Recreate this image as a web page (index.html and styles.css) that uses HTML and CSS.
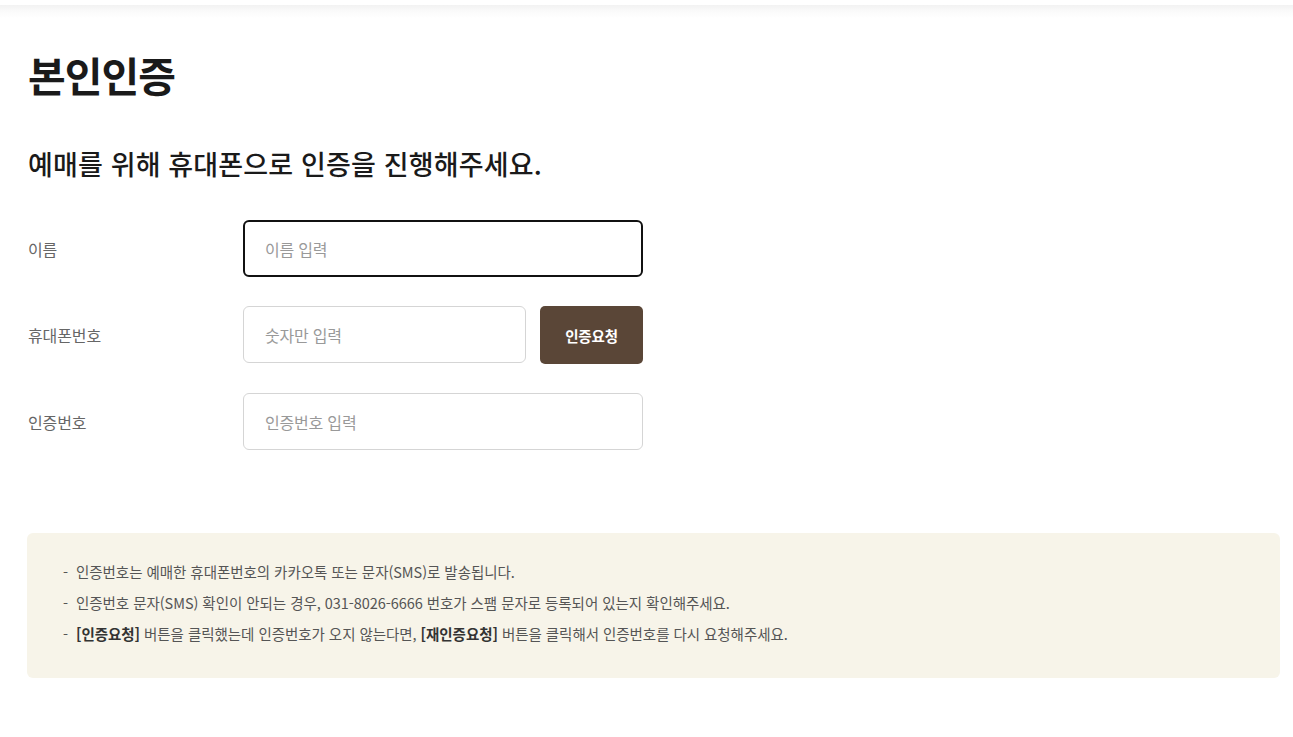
FILE: index.html
```html
<!DOCTYPE html>
<html lang="ko">
<head>
<meta charset="utf-8">
<title>본인인증</title>
<link rel="stylesheet" href="styles.css">
</head>
<body>
<div class="top-shade"></div>
<main class="page">
  <h1 class="title">본인인증</h1>
  <h2 class="subtitle">예매를 위해 휴대폰으로 인증을 진행해주세요.</h2>
  <form class="form">
    <div class="row">
      <label class="label" for="name">이름</label>
      <div class="field">
        <input id="name" class="input input-active" type="text" placeholder="이름 입력" autofocus>
      </div>
    </div>
    <div class="row">
      <label class="label" for="phone">휴대폰번호</label>
      <div class="field">
        <input id="phone" class="input input-short" type="text" placeholder="숫자만 입력">
        <button type="button" class="btn">인증요청</button>
      </div>
    </div>
    <div class="row">
      <label class="label" for="code">인증번호</label>
      <div class="field">
        <input id="code" class="input" type="text" placeholder="인증번호 입력">
      </div>
    </div>
  </form>
  <ul class="notice">
    <li>인증번호는 예매한 휴대폰번호의 카카오톡 또는 문자(SMS)로 발송됩니다.</li>
    <li>인증번호 문자(SMS) 확인이 안되는 경우, 031-8026-6666 번호가 스팸 문자로 등록되어 있는지 확인해주세요.</li>
    <li><strong>[인증요청]</strong> 버튼을 클릭했는데 인증번호가 오지 않는다면, <strong>[재인증요청]</strong> 버튼을 클릭해서 인증번호를 다시 요청해주세요.</li>
  </ul>
</main>
</body>
</html>
```

FILE: styles.css
```css
* { box-sizing: border-box; }
html, body {
  margin: 0;
  padding: 0;
  background: #fff;
  font-family: "Noto Sans CJK KR", "Noto Sans", sans-serif;
  color: #1a1a1a;
}
.top-shade {
  height: 18px;
  background: linear-gradient(to bottom, #fff 0, #fff 5px, #f2f2f2 5px, #fafafa 11px, #fff 18px);
}
.page {
  padding: 0 13px 40px 27px;
}
.title {
  margin: 32px 0 0 1px;
  font-size: 41px;
  font-weight: 700;
  line-height: 48px;
  letter-spacing: -1px;
  color: #1a1a1a;
}
.subtitle {
  margin: 49px 0 0 1px;
  font-size: 27px;
  font-weight: 500;
  line-height: 34px;
  letter-spacing: 0.15px;
  color: #1a1a1a;
}
.form {
  margin-top: 39px;
  display: flex;
  flex-direction: column;
  gap: 29px;
}
.row {
  display: flex;
  align-items: center;
}
.label {
  width: 216px;
  padding-left: 1px;
  font-size: 16px;
  letter-spacing: -0.1px;
  color: #666;
}
.field {
  display: flex;
  gap: 14px;
  width: 400px;
}
.input {
  width: 400px;
  height: 57px;
  border: 1px solid #d5d5d5;
  border-radius: 6px;
  padding: 0 21px;
  font-family: inherit;
  font-size: 16px;
  letter-spacing: -0.2px;
  color: #222;
  outline: none;
  background: #fff;
}
.input::placeholder { color: #999; }
.input-active {
  border: 2px solid #111;
  padding: 0 20px;
}
.input-short {
  width: 283px;
}
.btn {
  width: 103px;
  height: 58px;
  border: 0;
  border-radius: 5px;
  background: #5a4637;
  color: #fff;
  font-family: inherit;
  font-size: 14.5px;
  font-weight: 700;
  letter-spacing: -0.2px;
  cursor: pointer;
}
.notice {
  list-style: none;
  margin: 83px 0 0 0;
  padding: 23px 36px 29px 36px;
  background: #f7f4e9;
  border-radius: 6px;
}
.notice li {
  position: relative;
  padding-left: 13px;
  font-size: 14.5px;
  line-height: 31px;
  letter-spacing: -0.05px;
  color: #555;
}
.notice li::before {
  content: "-";
  position: absolute;
  left: 0;
  top: 0;
}
.notice strong {
  font-weight: 700;
  color: #333;
}
```
